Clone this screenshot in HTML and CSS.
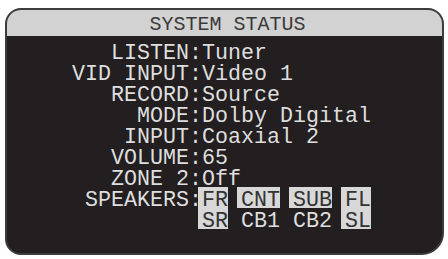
FILE: index.html
```html
<!DOCTYPE html>
<html>
<head>
<meta charset="utf-8">
<link rel="stylesheet" href="styles.css">
</head>
<body>
<div class="frame">
  <div class="header">SYSTEM STATUS</div>
  <div class="rows">
    <div class="label">LISTEN:</div><div class="value">Tuner</div>
    <div class="label">VID INPUT:</div><div class="value">Video 1</div>
    <div class="label">RECORD:</div><div class="value">Source</div>
    <div class="label">MODE:</div><div class="value">Dolby Digital</div>
    <div class="label">INPUT:</div><div class="value">Coaxial 2</div>
    <div class="label">VOLUME:</div><div class="value">65</div>
    <div class="label">ZONE 2:</div><div class="value">Off</div>
    <div class="label">SPEAKERS:</div>
    <div class="value speakers">
      <div><span class="on">FR</span> <span class="on">CNT</span> <span class="on">SUB</span> <span class="on">FL</span></div>
      <div><span class="on">SR</span> CB1 CB2 <span class="on">SL</span></div>
    </div>
  </div>
</div>
</body>
</html>
```
FILE: styles.css
```css
html, body {
  margin: 0;
  padding: 0;
  background: #ffffff;
}
.frame {
  box-sizing: border-box;
  margin: 8px 0 0 5px;
  width: 439px;
  height: 247px;
  border: 2px solid #3c3c3c;
  border-radius: 16px 16px 22px 16px;
  background: #231f20;
  overflow: hidden;
  font-family: "Liberation Mono", monospace;
}
.header {
  height: 22px;
  padding-top: 4px;
  line-height: 22px;
  font-size: 20px;
  text-align: center;
  color: #3a3a3a;
  background: #d2d2d2;
  padding-left: 6px;
  white-space: pre;
}
.rows {
  display: grid;
  grid-template-columns: 195px auto;
  padding-top: 7px;
  font-size: 21.67px;
  line-height: 21px;
  color: #dedede;
}
.label, .value {
  white-space: nowrap;
}
.label {
  text-align: right;
}
.on {
  color: #333333;
  padding: 1px 0 0 4px;
  margin-left: -4px;
  background: linear-gradient(#d8d8d8, #d8d8d8) 0 0 / 100% 21px no-repeat;
}
```
